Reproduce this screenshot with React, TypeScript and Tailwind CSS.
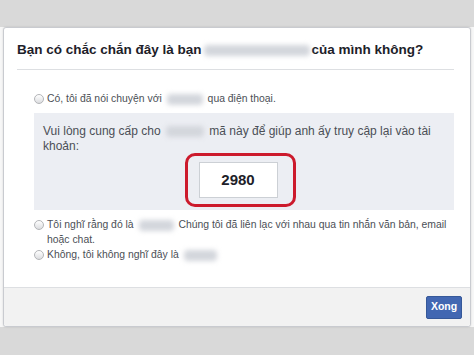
import React from "react";

const Blur = ({ w }: { w: number }) => (
  <span
    className="inline-block align-middle h-[11px] rounded-[4px] bg-[#d3d6dc] blur-[2.5px] mx-[2px]"
    style={{ width: w }}
  />
);

const Radio = () => (
  <span className="mt-[2.5px] shrink-0 w-[10px] h-[10px] rounded-full border border-[#b3b5b8] bg-gradient-to-b from-[#ffffff] to-[#dcdde0]" />
);

export default function App() {
  return (
    <div
      className="w-[474px] h-[355px] flex flex-col bg-[#d9d9d9] overflow-hidden"
      style={{ fontFamily: '"Liberation Sans", Arial, sans-serif' }}
    >
      <div className="h-[27px] shrink-0" />
      <div className="h-[300px] shrink-0 bg-[#f7f7f7] flex">
        <div className="ml-[3px] w-[468px] h-full flex flex-col bg-white border border-[#c9cbd0] rounded-[3px] shadow-[0_0_2px_rgba(0,0,0,0.15)]">
          <div className="flex-1 flex flex-col">
            <div className="ml-[13px] mr-[16px] pt-[13px] pb-[10px] border-b border-[#dddfe2]">
              <div className="text-[13.5px] leading-[18px] font-bold text-[#1d2129] flex items-center">
                <span>Bạn có chắc chắn đây là bạn</span>
                <Blur w={106} />
                <span>của mình không?</span>
              </div>
            </div>
            <div className="ml-[30px] mr-[16px] flex flex-col">
              <div className="mt-[21px] flex items-start gap-[3px] text-[10.4px] leading-[15px] text-[#4b4f56]">
                <Radio />
                <span>
                  Có, tôi đã nói chuyện với <Blur w={36} /> qua điện thoại.
                </span>
              </div>
              <div className="mt-[7px] bg-[#eceef3] pt-[11px] pb-[3px] pl-[9px] pr-[8px] flex flex-col">
                <div className="text-[12px] leading-[15px] text-[#4b4f56]">
                  Vui lòng cung cấp cho <Blur w={38} /> mã này để giúp anh ấy truy cập lại vào tài
                  <br />
                  khoản:
                </div>
                <div className="-mt-[1px] self-center ml-[-9px] w-[111px] h-[54px] border-[3px] border-[#cc1a2c] rounded-[10px] flex items-center pl-[11px]">
                  <div className="w-[79px] h-[36px] bg-white border border-[#ccd0d5] flex items-center justify-center text-[15px] font-bold text-[#1d2129]">
                    2980
                  </div>
                </div>
              </div>
              <div className="mt-[7px] flex items-start gap-[3px] text-[10.4px] leading-[15px] text-[#4b4f56]">
                <Radio />
                <span>
                  Tôi nghĩ rằng đó là <Blur w={35} /> Chúng tôi đã liên lạc với nhau qua tin nhắn văn bản, email
                  <br />
                  hoặc chat.
                </span>
              </div>
              <div className="flex items-start gap-[3px] text-[10.4px] leading-[15px] text-[#4b4f56]">
                <Radio />
                <span>
                  Không, tôi không nghĩ đây là <Blur w={33} />
                </span>
              </div>
            </div>
          </div>
          <div className="h-[39px] shrink-0 bg-[#f2f2f2] border-t border-[#dddfe2] flex items-center justify-end pr-[8px] rounded-b-[3px]">
            <button className="w-[36px] h-[23px] bg-[#4267b2] border border-[#365899] rounded-[2px] text-white text-[10.5px] font-bold">
              Xong
            </button>
          </div>
        </div>
      </div>
      <div className="flex-1" />
    </div>
  );
}
